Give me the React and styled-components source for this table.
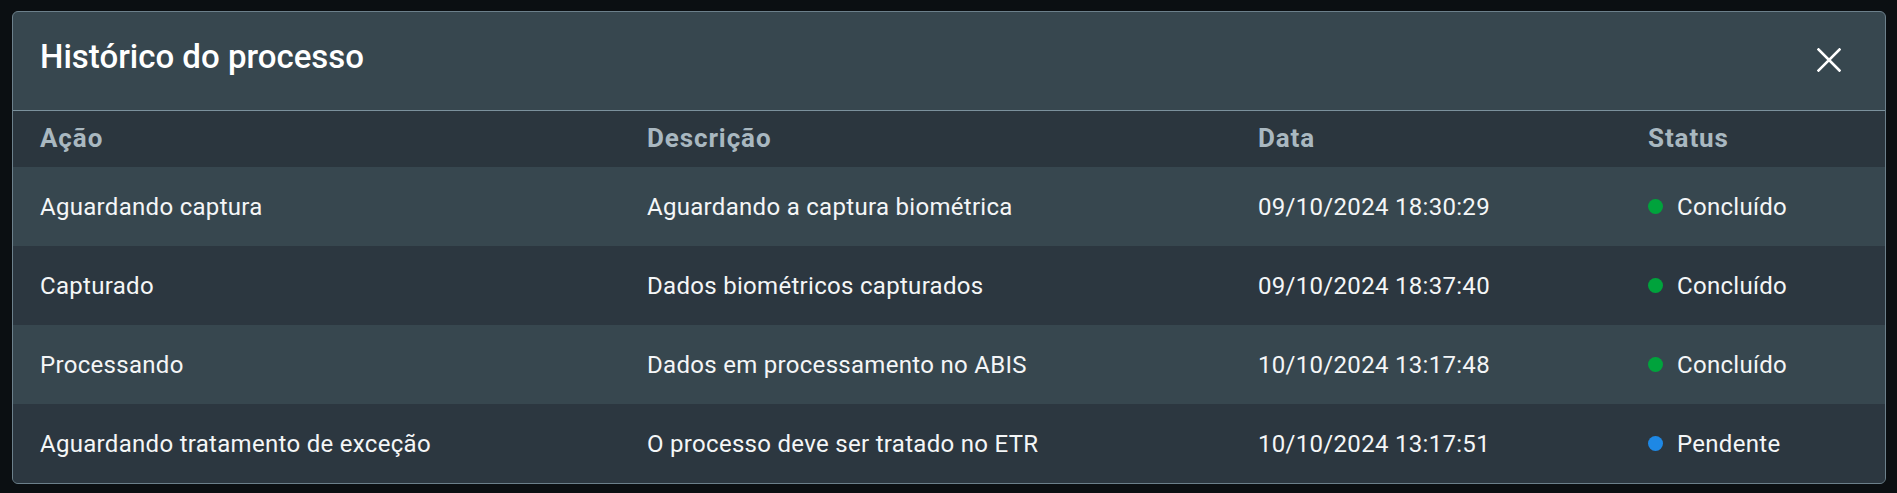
import React from 'react';
import styled, { createGlobalStyle } from 'styled-components';

const GlobalStyle = createGlobalStyle`
  html, body {
    margin: 0;
    padding: 0;
    background: #0b0f12;
    font-family: Roboto, "Liberation Sans", sans-serif;
  }
`;

const Backdrop = styled.div`
  width: 1897px;
  height: 493px;
  padding: 11px 0 0 12px;
  box-sizing: border-box;
  background: #0b0f12;
  overflow: hidden;
`;

const Modal = styled.section`
  width: 1874px;
  box-sizing: border-box;
  background: #37474f;
  border: 1px solid #6c808b;
  border-radius: 6px;
  overflow: hidden;
`;

const Header = styled.header`
  height: 98px;
  display: flex;
  align-items: center;
  justify-content: space-between;
  padding: 0 44px 0 27px;
  border-bottom: 1px solid #7b919c;
`;

const Title = styled.h2`
  margin: 0;
  font-size: 33px;
  font-weight: 500;
  color: #ffffff;
  letter-spacing: 0;
  padding-bottom: 9px;
`;

const CloseButton = styled.button`
  background: none;
  border: none;
  padding: 0;
  width: 24px;
  height: 24px;
  display: flex;
  align-items: center;
  justify-content: center;
  cursor: pointer;
  margin-bottom: 2px;
`;

const Row = styled.div`
  display: grid;
  grid-template-columns: 607px 611px 390px 1fr;
  align-items: center;
  height: ${(p) => (p.head ? '56px' : '79px')};
  background: ${(p) => (p.head ? '#2b363e' : p.odd ? '#37474f' : '#2c3740')};
`;

const HeadCell = styled.div`
  padding-left: 27px;
  font-size: 26px;
  font-weight: 700;
  color: #a9b8c0;
  letter-spacing: 0.9px;
  padding-bottom: 3px;
`;

const Cell = styled.div`
  padding-left: 27px;
  font-size: 24px;
  font-weight: 400;
  color: #f4f6f7;
  letter-spacing: 0.3px;
  display: flex;
  align-items: center;
  gap: 14px;
`;

const Dot = styled.span`
  width: 15px;
  height: 15px;
  border-radius: 50%;
  background: ${(p) => p.color};
  flex-shrink: 0;
`;

const rows = [
  {
    acao: 'Aguardando captura',
    descricao: 'Aguardando a captura biométrica',
    data: '09/10/2024 18:30:29',
    status: 'Concluído',
  },
  {
    acao: 'Capturado',
    descricao: 'Dados biométricos capturados',
    data: '09/10/2024 18:37:40',
    status: 'Concluído',
  },
  {
    acao: 'Processando',
    descricao: 'Dados em processamento no ABIS',
    data: '10/10/2024 13:17:48',
    status: 'Concluído',
  },
  {
    acao: 'Aguardando tratamento de exceção',
    descricao: 'O processo deve ser tratado no ETR',
    data: '10/10/2024 13:17:51',
    status: 'Pendente',
  },
];

const statusColor = {
  Concluído: '#00a33c',
  Pendente: '#1e88e5',
};

const CloseIcon = () => (
  <svg width="24" height="24" viewBox="0 0 24 24">
    <path
      d="M1.5 1.5 L22.5 22.5 M22.5 1.5 L1.5 22.5"
      stroke="#ffffff"
      strokeWidth="2.6"
      strokeLinecap="square"
    />
  </svg>
);

const App = () => (
  <Backdrop>
    <GlobalStyle />
    <Modal>
      <Header>
        <Title>Histórico do processo</Title>
        <CloseButton aria-label="Fechar">
          <CloseIcon />
        </CloseButton>
      </Header>
      <Row head>
        <HeadCell>Ação</HeadCell>
        <HeadCell>Descrição</HeadCell>
        <HeadCell>Data</HeadCell>
        <HeadCell>Status</HeadCell>
      </Row>
      {rows.map((r, i) => (
        <Row key={r.data} odd={i % 2 === 0}>
          <Cell>{r.acao}</Cell>
          <Cell>{r.descricao}</Cell>
          <Cell>{r.data}</Cell>
          <Cell>
            <Dot color={statusColor[r.status]} />
            {r.status}
          </Cell>
        </Row>
      ))}
    </Modal>
  </Backdrop>
);

export default App;
